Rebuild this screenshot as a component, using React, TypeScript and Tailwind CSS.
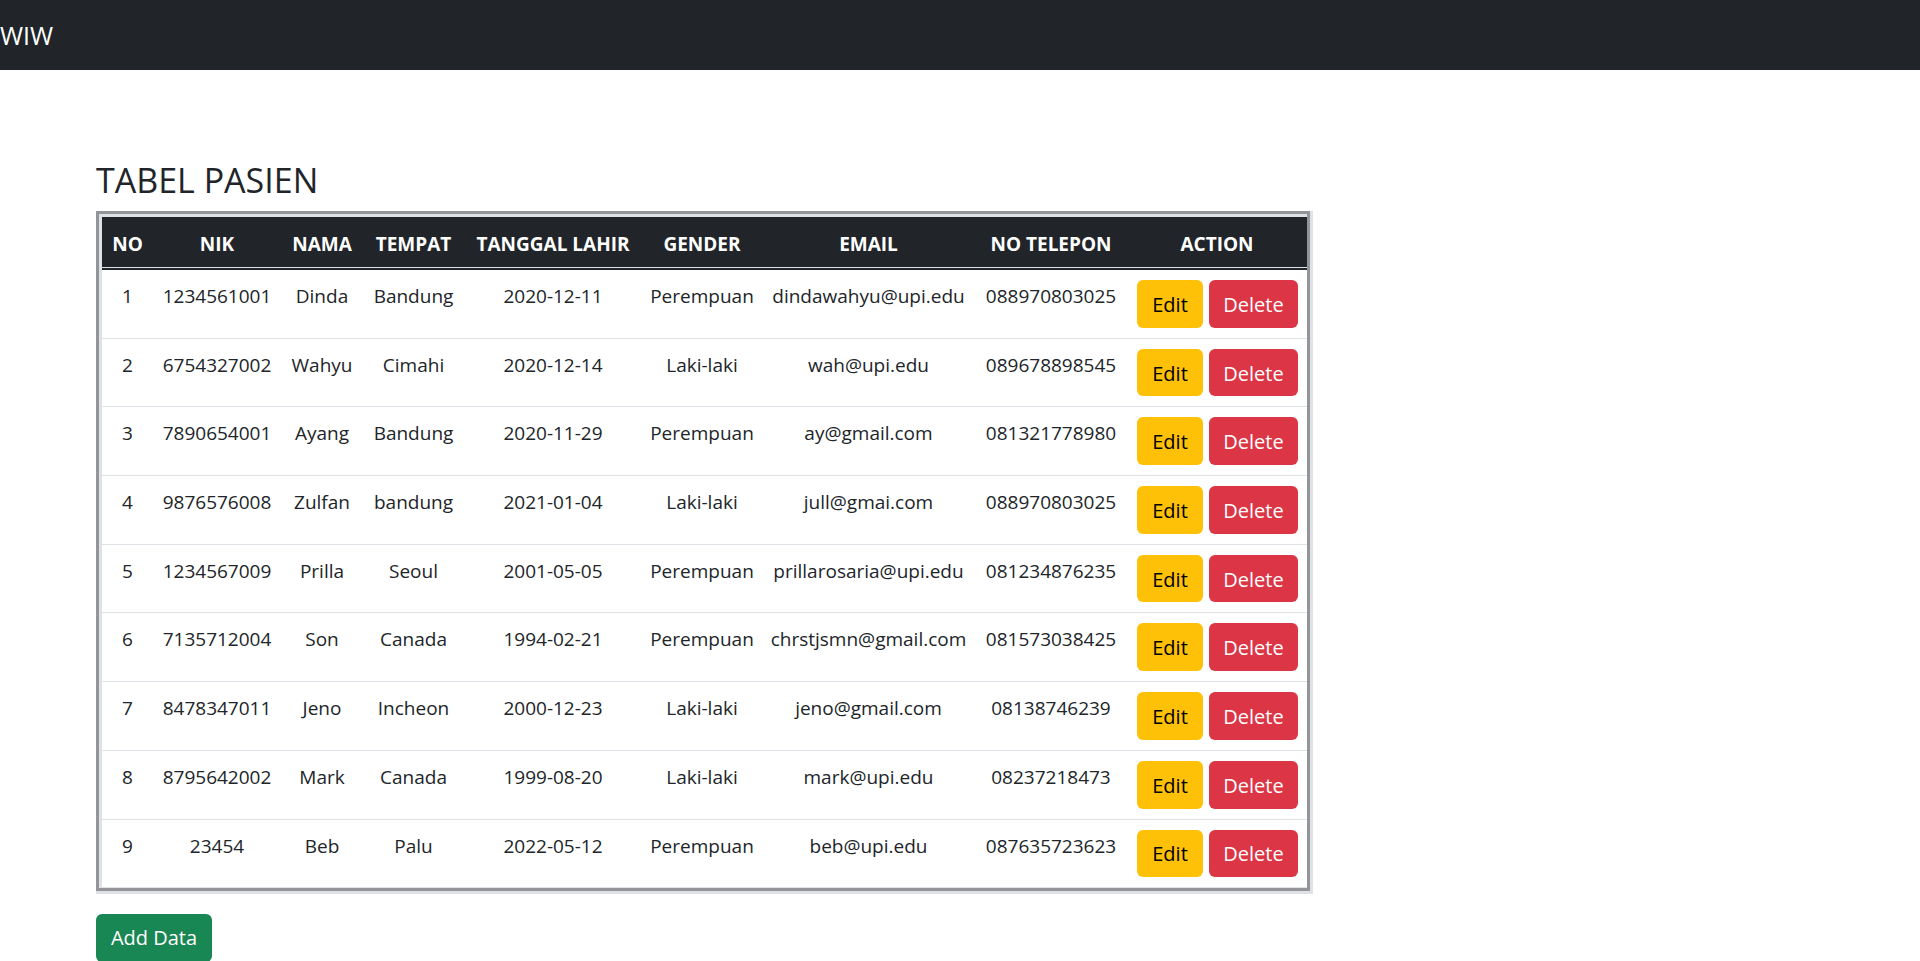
import React from 'react';

interface Pasien {
  no: number;
  nik: string;
  nama: string;
  tempat: string;
  tanggal: string;
  gender: string;
  email: string;
  telepon: string;
}

const pasien: Pasien[] = [
  { no: 1, nik: '1234561001', nama: 'Dinda', tempat: 'Bandung', tanggal: '2020-12-11', gender: 'Perempuan', email: 'dindawahyu@upi.edu', telepon: '088970803025' },
  { no: 2, nik: '6754327002', nama: 'Wahyu', tempat: 'Cimahi', tanggal: '2020-12-14', gender: 'Laki-laki', email: 'wah@upi.edu', telepon: '089678898545' },
  { no: 3, nik: '7890654001', nama: 'Ayang', tempat: 'Bandung', tanggal: '2020-11-29', gender: 'Perempuan', email: 'ay@gmail.com', telepon: '081321778980' },
  { no: 4, nik: '9876576008', nama: 'Zulfan', tempat: 'bandung', tanggal: '2021-01-04', gender: 'Laki-laki', email: 'jull@gmai.com', telepon: '088970803025' },
  { no: 5, nik: '1234567009', nama: 'Prilla', tempat: 'Seoul', tanggal: '2001-05-05', gender: 'Perempuan', email: 'prillarosaria@upi.edu', telepon: '081234876235' },
  { no: 6, nik: '7135712004', nama: 'Son', tempat: 'Canada', tanggal: '1994-02-21', gender: 'Perempuan', email: 'chrstjsmn@gmail.com', telepon: '081573038425' },
  { no: 7, nik: '8478347011', nama: 'Jeno', tempat: 'Incheon', tanggal: '2000-12-23', gender: 'Laki-laki', email: 'jeno@gmail.com', telepon: '08138746239' },
  { no: 8, nik: '8795642002', nama: 'Mark', tempat: 'Canada', tanggal: '1999-08-20', gender: 'Laki-laki', email: 'mark@upi.edu', telepon: '08237218473' },
  { no: 9, nik: '23454', nama: 'Beb', tempat: 'Palu', tanggal: '2022-05-12', gender: 'Perempuan', email: 'beb@upi.edu', telepon: '087635723623' },
];

const headers = ['NO', 'NIK', 'NAMA', 'TEMPAT', 'TANGGAL LAHIR', 'GENDER', 'EMAIL', 'NO TELEPON', 'ACTION'];

const App = () => {
  return (
    <div className="min-h-screen bg-white text-[#212529] font-['Open_Sans',sans-serif]">
      {/* Navbar */}
      <nav className="h-[70px] bg-[#212529] flex items-center">
        <span className="text-[25px] leading-[30px] text-white">WIW</span>
      </nav>

      <div className="pl-[96px] pt-[89px]">
        <h3 className="text-[34px] font-medium leading-[42px] mb-[10px]">TABEL PASIEN</h3>

        {/* Table with the old-style border */}
        <div className="w-fit border-b-[3px] border-r-[3px] border-[#dee2e6]">
          <div className="border-[3px] border-[#939598]">
            <div className="border-t-[3px] border-l-[3px] border-[#dee2e6]">
              <table className="table-fixed border-separate border-spacing-0 w-[1205px] text-[19px] leading-[30px]">
                <colgroup>
                  <col className="w-[51px]" />
                  <col className="w-[128px]" />
                  <col className="w-[82px]" />
                  <col className="w-[101px]" />
                  <col className="w-[178px]" />
                  <col className="w-[120px]" />
                  <col className="w-[213px]" />
                  <col className="w-[152px]" />
                  <col className="w-[180px]" />
                </colgroup>
                <thead>
                  <tr>
                    {headers.map(h => (
                      <th
                        key={h}
                        className="bg-[#212529] text-white font-bold text-center whitespace-nowrap pt-[12px] pb-[8px] border-b border-[#dee2e6]"
                      >
                        {h}
                      </th>
                    ))}
                  </tr>
                </thead>
                <tbody>
                  {pasien.map((p, i) => {
                    const line = i === 0
                      ? 'border-b border-b-[#dee2e6] border-t-2 border-t-[#212529]'
                      : 'border-b border-b-[#dee2e6]';
                    const cell = `align-top text-center whitespace-nowrap pt-[11px] pb-[9px] ${line}`;
                    return (
                      <tr key={p.no}>
                        <td className={cell}>{p.no}</td>
                        <td className={cell}>{p.nik}</td>
                        <td className={cell}>{p.nama}</td>
                        <td className={cell}>{p.tempat}</td>
                        <td className={cell}>{p.tanggal}</td>
                        <td className={cell}>{p.gender}</td>
                        <td className={cell}>{p.email}</td>
                        <td className={cell}>{p.telepon}</td>
                        <td className={`align-top whitespace-nowrap pt-[10px] pb-[10px] ${line}`}>
                          <div className="flex justify-center gap-[6px] pl-[1px]">
                            <button className="w-[66px] h-[47.7px] pt-[2px] rounded-[6px] bg-[#ffc107] text-black text-[20px]">
                              Edit
                            </button>
                            <button className="w-[89px] h-[47.7px] pt-[2px] rounded-[6px] bg-[#dc3545] text-white text-[20px]">
                              Delete
                            </button>
                          </div>
                        </td>
                      </tr>
                    );
                  })}
                </tbody>
              </table>
            </div>
          </div>
        </div>

        <div className="mt-[20px]">
          <button className="w-[116px] h-[47.7px] rounded-[6px] bg-[#198754] text-white text-[20px]">
            Add Data
          </button>
        </div>
      </div>
    </div>
  );
};

export default App;
